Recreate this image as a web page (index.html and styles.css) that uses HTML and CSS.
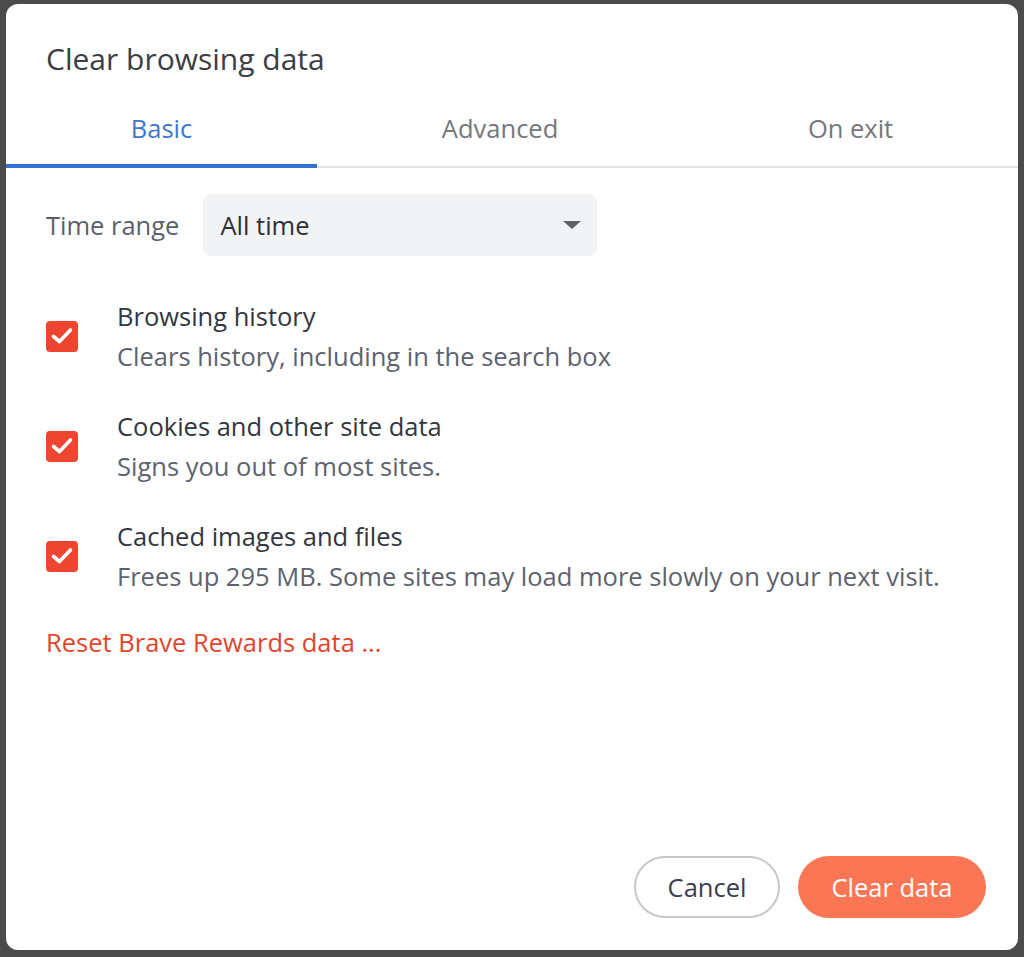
FILE: index.html
```html
<!DOCTYPE html>
<html lang="en">
<head>
<meta charset="utf-8">
<title>Clear browsing data</title>
<link rel="stylesheet" href="styles.css">
</head>
<body>
<div class="dialog">
  <h1 class="title">Clear browsing data</h1>
  <div class="tabs">
    <div class="tab active">Basic</div>
    <div class="tab">Advanced</div>
    <div class="tab">On exit</div>
  </div>
  <div class="content">
    <div class="range">
      <span class="range-label">Time range</span>
      <div class="select">
        <span>All time</span>
        <svg class="arrow" width="18" height="8" viewBox="0 0 18 8"><path d="M0 0 H18 L9 8 Z" fill="#5f6368"/></svg>
      </div>
    </div>
    <div class="item">
      <span class="check"><svg width="24" height="20" viewBox="0 0 24 20"><path d="M3.5 10.5 L9.5 15.5 L20.5 4" fill="none" stroke="#fff" stroke-width="3.6" stroke-linecap="round" stroke-linejoin="round"/></svg></span>
      <div class="item-text">
        <div class="item-label">Browsing history</div>
        <div class="item-desc">Clears history, including in the search box</div>
      </div>
    </div>
    <div class="item">
      <span class="check"><svg width="24" height="20" viewBox="0 0 24 20"><path d="M3.5 10.5 L9.5 15.5 L20.5 4" fill="none" stroke="#fff" stroke-width="3.6" stroke-linecap="round" stroke-linejoin="round"/></svg></span>
      <div class="item-text">
        <div class="item-label">Cookies and other site data</div>
        <div class="item-desc">Signs you out of most sites.</div>
      </div>
    </div>
    <div class="item">
      <span class="check"><svg width="24" height="20" viewBox="0 0 24 20"><path d="M3.5 10.5 L9.5 15.5 L20.5 4" fill="none" stroke="#fff" stroke-width="3.6" stroke-linecap="round" stroke-linejoin="round"/></svg></span>
      <div class="item-text">
        <div class="item-label">Cached images and files</div>
        <div class="item-desc">Frees up 295 MB. Some sites may load more slowly on your next visit.</div>
      </div>
    </div>
    <div class="reset">Reset Brave Rewards data ...</div>
  </div>
  <div class="actions">
    <button class="btn cancel">Cancel</button>
    <button class="btn primary">Clear data</button>
  </div>
</div>
</body>
</html>
```

FILE: styles.css
```css
html, body {
  margin: 0;
  padding: 0;
}
body {
  background: #4b4b4b;
  width: 1024px;
  height: 957px;
  overflow: hidden;
  font-family: "Open Sans", Lato, sans-serif;
  color: #3b3e4f;
}
.dialog {
  margin: 4px 6px 0 6px;
  width: 1012px;
  height: 946px;
  background: #fff;
  border-radius: 12px;
  display: flex;
  flex-direction: column;
  box-sizing: border-box;
}
.title {
  margin: 0;
  padding: 37px 40px 0 40px;
  font-size: 30px;
  font-weight: 400;
  line-height: 36px;
  color: #3c3d45;
}
.tabs {
  display: flex;
  margin-top: 17px;
  border-bottom: 2px solid #e3e3e3;
}
.tab {
  flex: 1 1 auto;
  text-align: center;
  font-size: 25.5px;
  line-height: 32px;
  padding: 18px 0 20px;
  color: #76767c;
  border-bottom: 4px solid transparent;
  margin-bottom: -2px;
}
.tab.active {
  color: #3c78cf;
  border-bottom-color: #2f72d2;
}
.content {
  padding: 26px 40px 0 40px;
  flex: 1;
}
.range {
  display: flex;
  align-items: center;
  gap: 24px;
}
.range-label {
  font-size: 25.5px;
  color: #5c5f6b;
}
.select {
  width: 394px;
  height: 62px;
  background: #f1f3f5;
  border-radius: 8px;
  display: flex;
  align-items: center;
  justify-content: space-between;
  padding: 0 16px 0 17px;
  box-sizing: border-box;
  font-size: 25.5px;
  color: #2e3039;
}
.item {
  display: flex;
  align-items: center;
  gap: 40px;
  margin-top: 40px;
}
.item + .item {
  margin-top: 30px;
}
.check {
  width: 32px;
  height: 31px;
  border-radius: 4px;
  background: #ed452f;
  display: flex;
  align-items: center;
  justify-content: center;
  flex: none;
}
.item-text {
  display: flex;
  flex-direction: column;
  margin-left: -1px;
}
.item-label {
  font-size: 25.5px;
  line-height: 40px;
  color: #34363f;
}
.item-desc {
  font-size: 25.5px;
  line-height: 40px;
  color: #5f626e;
}
.reset {
  margin-top: 26px;
  font-size: 25.5px;
  line-height: 40px;
  color: #e2452e;
}
.actions {
  display: flex;
  justify-content: flex-end;
  gap: 18px;
  padding: 0 32px 32px 0;
}
.btn {
  font-family: inherit;
  font-size: 25.5px;
  height: 62px;
  border-radius: 31px;
  padding: 0;
  cursor: pointer;
}
.cancel {
  width: 146px;
  background: #fff;
  border: 2px solid #c8c8cc;
  color: #3b3e4f;
}
.primary {
  width: 188px;
  background: #fb7654;
  border: none;
  color: #fff;
}
```
